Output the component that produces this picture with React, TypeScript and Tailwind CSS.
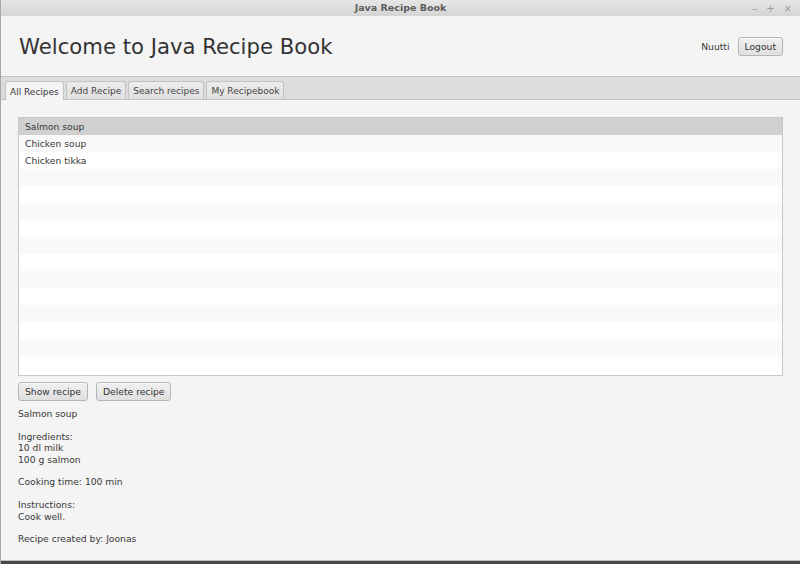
import React from "react";

const FONT = { fontFamily: '"DejaVu Sans", Verdana, sans-serif' };

const RECIPES = ["Salmon soup", "Chicken soup", "Chicken tikka"];
const TABS = ["All Recipes", "Add Recipe", "Search recipes", "My Recipebook"];

function FxButton({ label }: { label: string }) {
  return (
    <button
      type="button"
      className="h-[19px] rounded-[3px] border border-[#b5b5b5] bg-gradient-to-b from-[#f0f0f0] to-[#e0e0e0] px-[6px] text-[9.2px] leading-none text-[#333] shadow-[inset_0_1px_0_#fafafa]"
    >
      {label}
    </button>
  );
}

export default function App() {
  const rows = Array.from({ length: 15 }, (_, i) => RECIPES[i] ?? "");

  return (
    <div
      className="flex h-[564px] w-[800px] flex-col overflow-hidden border-l border-[#a8a8a8] bg-[#f4f4f4] text-[#383838]"
      style={FONT}
    >
      {/* window title bar */}
      <div className="relative flex h-[16px] shrink-0 items-center justify-center bg-gradient-to-b from-[#e6e6e6] to-[#d5d5d5]">
        <span className="text-[9.5px] font-bold text-[#5c5c5c]">Java Recipe Book</span>
        <div className="absolute right-[8px] top-0 flex h-[16px] items-center gap-[9px] text-[10px] text-[#9a9a9a]">
          <span>–</span>
          <span>+</span>
          <span>×</span>
        </div>
      </div>

      {/* header */}
      <div className="flex h-[60px] shrink-0 items-center justify-between pl-[18px] pr-[17px]">
        <h1 className="pt-[2px] text-[21.2px] leading-none text-[#333]">Welcome to Java Recipe Book</h1>
        <div className="flex items-center gap-[8px] pt-[1px]">
          <span className="text-[9.2px]">Nuutti</span>
          <FxButton label="Logout" />
        </div>
      </div>

      {/* tab header */}
      <div className="flex h-[24px] shrink-0 items-end gap-[2px] border-y border-[#c4c4c4] bg-[#dcdcdc] pl-[4px]">
        {TABS.map((tab, i) => (
          <div
            key={tab}
            className={
              i === 0
                ? "-mb-px flex h-[19px] items-center rounded-t-[3px] border border-b-0 border-[#c2c2c2] bg-[#f4f4f4] px-[4px] pt-[3px] text-[9px]"
                : "flex h-[18px] items-center rounded-t-[3px] border border-b-0 border-[#c2c2c2] bg-gradient-to-b from-[#ececec] to-[#e0e0e0] px-[4px] pt-[2px] text-[9px] text-[#444]"
            }
          >
            {tab}
          </div>
        ))}
      </div>

      {/* tab content */}
      <div className="flex flex-1 flex-col px-[17px] pt-[17px]">
        <div className="h-[259px] border border-[#c8c8c8] bg-white">
          {rows.map((name, i) => (
            <div
              key={i}
              className={
                i === 0
                  ? "flex h-[17px] items-center bg-[#d0d0d0] px-[6px] text-[9.2px]"
                  : i % 2 === 1
                    ? "flex h-[17px] items-center bg-[#f9f9f9] px-[6px] text-[9.2px]"
                    : "flex h-[17px] items-center bg-white px-[6px] text-[9.2px]"
              }
            >
              {name}
            </div>
          ))}
        </div>

        <div className="mt-[6px] flex gap-[8px]">
          <FxButton label="Show recipe" />
          <FxButton label="Delete recipe" />
        </div>

        <div className="mt-[7px] text-[9.2px] leading-[11.4px]">
          <p>Salmon soup</p>
          <p className="mt-[11.4px]">Ingredients:</p>
          <p>10 dl milk</p>
          <p>100 g salmon</p>
          <p className="mt-[11.4px]">Cooking time: 100 min</p>
          <p className="mt-[11.4px]">Instructions:</p>
          <p>Cook well.</p>
          <p className="mt-[11.4px]">Recipe created by: Joonas</p>
        </div>
      </div>

      {/* bottom frame */}
      <div className="h-[1px] shrink-0 bg-[#bdbdbd]" />
      <div className="h-[3px] shrink-0 bg-[#4a4a4a]" />
    </div>
  );
}
